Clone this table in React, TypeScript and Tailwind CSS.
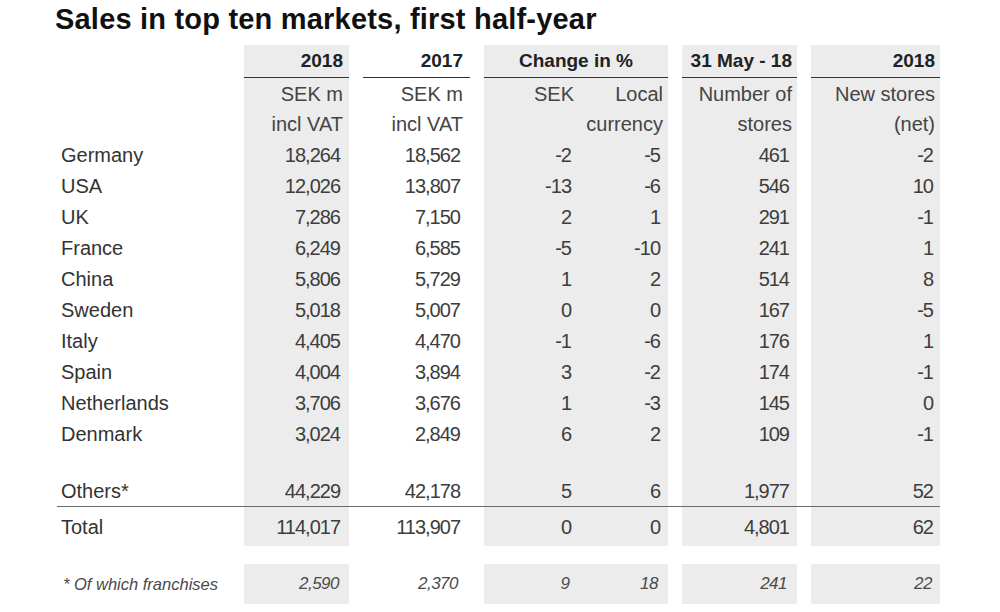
import React from "react";

const G = "grid grid-cols-[173px_105px_107px_184px_115px_129px] gap-x-[14px]";
const BG = "bg-[#ececec]";

type Row = [string, string, string, string, string, string, string];

const rows: Row[] = [
  ["Germany", "18,264", "18,562", "-2", "-5", "461", "-2"],
  ["USA", "12,026", "13,807", "-13", "-6", "546", "10"],
  ["UK", "7,286", "7,150", "2", "1", "291", "-1"],
  ["France", "6,249", "6,585", "-5", "-10", "241", "1"],
  ["China", "5,806", "5,729", "1", "2", "514", "8"],
  ["Sweden", "5,018", "5,007", "0", "0", "167", "-5"],
  ["Italy", "4,405", "4,470", "-1", "-6", "176", "1"],
  ["Spain", "4,004", "3,894", "3", "-2", "174", "-1"],
  ["Netherlands", "3,706", "3,676", "1", "-3", "145", "0"],
  ["Denmark", "3,024", "2,849", "6", "2", "109", "-1"],
];

function Num({ v }: { v: string }) {
  return <span className="tracking-[-1px]">{v}</span>;
}

function DataRow({ r, h, extra = "" }: { r: Row; h: string; extra?: string }) {
  return (
    <div className={`${G} ${h} ${extra} text-[20px] text-[#3d3d3d]`}>
      <div className="flex items-center pl-[4px] text-[#333]">{r[0]}</div>
      <div className={`${BG} flex items-center justify-end pr-[9px]`}>
        <Num v={r[1]} />
      </div>
      <div className="flex items-center justify-end pr-[10px]">
        <Num v={r[2]} />
      </div>
      <div className={`${BG} flex`}>
        <div className="w-[94px] flex items-center justify-end pr-[7px]">
          <Num v={r[3]} />
        </div>
        <div className="w-[90px] flex items-center justify-end pr-[8px]">
          <Num v={r[4]} />
        </div>
      </div>
      <div className={`${BG} flex items-center justify-end pr-[8px]`}>
        <Num v={r[5]} />
      </div>
      <div className={`${BG} flex items-center justify-end pr-[7px]`}>
        <Num v={r[6]} />
      </div>
    </div>
  );
}

function SubRow({ c }: { c: string[] }) {
  return (
    <div className={`${G} h-[31px] text-[20px] text-[#444]`}>
      <div />
      <div className={`${BG} flex items-center justify-end pr-[6px]`}>{c[0]}</div>
      <div className="flex items-center justify-end pr-[7px]">{c[1]}</div>
      <div className={`${BG} flex`}>
        <div className="w-[94px] flex items-center justify-end pr-[4px]">{c[2]}</div>
        <div className="w-[90px] flex items-center justify-end pr-[5px]">{c[3]}</div>
      </div>
      <div className={`${BG} flex items-center justify-end pr-[5px]`}>{c[4]}</div>
      <div className={`${BG} flex items-center justify-end pr-[5px]`}>{c[5]}</div>
    </div>
  );
}

export default function App() {
  return (
    <div className="w-[1000px] h-[612px] overflow-hidden bg-white font-['Liberation_Sans',Arial,sans-serif]">
      <h1 className="pl-[55px] pt-[2px] h-[45px] text-[29px] leading-[34px] tracking-[0.2px] font-bold text-[#111]">
        Sales in top ten markets, first half-year
      </h1>
      <div className="ml-[57px] w-[883px]">
        {/* header */}
        <div className={`${G} h-[33px] text-[19px] font-semibold text-[#222]`}>
          <div />
          <div className={`${BG} border-b border-[#333] flex items-center justify-end pr-[6px]`}>2018</div>
          <div className="border-b border-[#333] flex items-center justify-end pr-[7px]">2017</div>
          <div className={`${BG} border-b border-[#333] flex items-center justify-center`}>Change in %</div>
          <div className={`${BG} border-b border-[#333] flex items-center justify-end pr-[5px]`}>31 May - 18</div>
          <div className={`${BG} border-b border-[#333] flex items-center justify-end pr-[5px]`}>2018</div>
        </div>
        <SubRow c={["SEK m", "SEK m", "SEK", "Local", "Number of", "New stores"]} />
        <div className={`${G} h-[30px] text-[20px] text-[#444]`}>
          <div />
          <div className={`${BG} flex items-center justify-end pr-[6px]`}>incl VAT</div>
          <div className="flex items-center justify-end pr-[7px]">incl VAT</div>
          <div className={`${BG} flex`}>
            <div className="w-[94px]" />
            <div className="w-[90px] flex items-center justify-end pr-[5px]">currency</div>
          </div>
          <div className={`${BG} flex items-center justify-end pr-[5px]`}>stores</div>
          <div className={`${BG} flex items-center justify-end pr-[5px]`}>(net)</div>
        </div>
        {rows.map((r) => (
          <DataRow key={r[0]} r={r} h="h-[31px]" />
        ))}
        {/* spacer */}
        <div className={`${G} h-[26px]`}>
          <div />
          <div className={BG} />
          <div />
          <div className={BG} />
          <div className={BG} />
          <div className={BG} />
        </div>
        <DataRow
          r={["Others*", "44,229", "42,178", "5", "6", "1,977", "52"]}
          h="h-[32px]"
          extra="border-b border-[#6b6b6b]"
        />
        <DataRow r={["Total", "114,017", "113,907", "0", "0", "4,801", "62"]} h="h-[39px]" />
        <div className="h-[18px]" />
        <div className={`${G} h-[40px] text-[17px] italic text-[#4a4a4a]`}>
          <div className="flex items-center pl-[6px] text-[16.5px]">* Of which franchises</div>
          <div className={`${BG} flex items-center justify-end pr-[10px]`}>
            <span className="tracking-[-0.5px]">2,590</span>
          </div>
          <div className="flex items-center justify-end pr-[12px]">
            <span className="tracking-[-0.5px]">2,370</span>
          </div>
          <div className={`${BG} flex`}>
            <div className="w-[94px] flex items-center justify-end pr-[8px]">9</div>
            <div className="w-[90px] flex items-center justify-end pr-[10px]">
              <span className="tracking-[-0.5px]">18</span>
            </div>
          </div>
          <div className={`${BG} flex items-center justify-end pr-[10px]`}>
            <span className="tracking-[-0.5px]">241</span>
          </div>
          <div className={`${BG} flex items-center justify-end pr-[8px]`}>
            <span className="tracking-[-0.5px]">22</span>
          </div>
        </div>
      </div>
    </div>
  );
}
